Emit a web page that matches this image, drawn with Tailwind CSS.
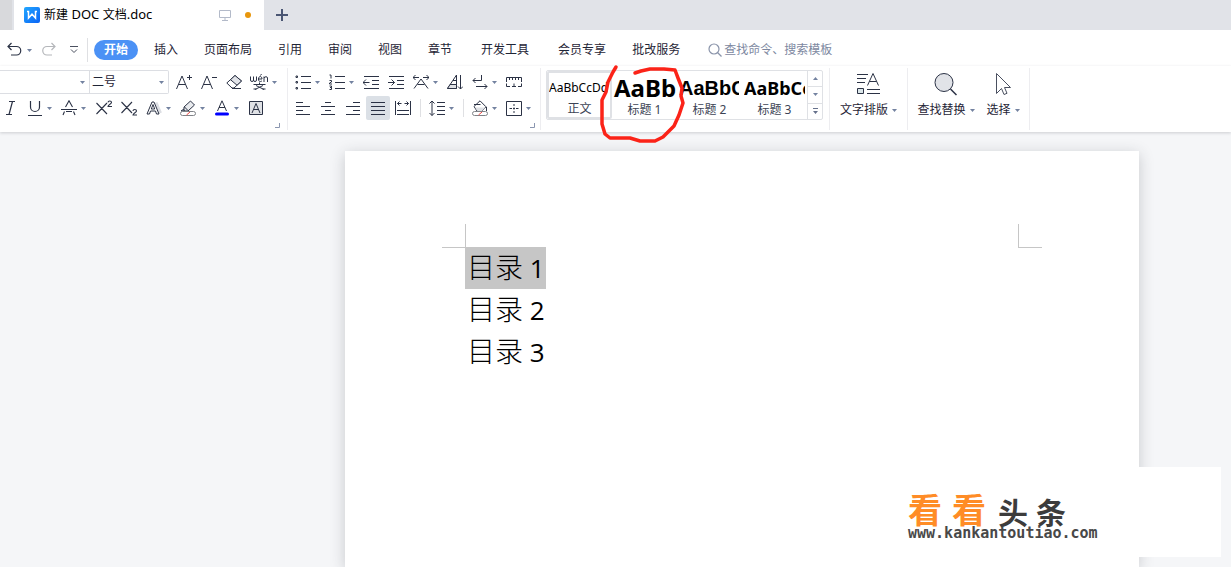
<!DOCTYPE html>
<html lang="zh-CN">
<head>
<meta charset="utf-8">
<meta name="viewport" content="width=device-width, initial-scale=1">
<title>新建 DOC 文档.doc</title>
<script src="https://cdn.jsdelivr.net/npm/@tailwindcss/browser@4"></script>
</head>
<body class="flex min-h-screen flex-col overflow-hidden bg-[#f5f6f8] font-['Noto_Sans','Noto_Sans_CJK_SC',sans-serif] text-xs text-[#1f2536]">

<svg class="hidden" aria-hidden="true">
  <symbol id="caret" viewBox="0 0 5 3"><path d="M0 0h5L2.500 3z" fill="#7382a0"/></symbol>
  <symbol id="corner" viewBox="0 0 5 5"><path d="M4.500 0v4.500H0" fill="none" stroke="#8b96b0"/></symbol>
</svg>

<!-- Document tabs -->
<header class="flex h-[30px] bg-[#e1e3e8]">
  <div class="mr-0.5 w-3 bg-[#d8d9dc]"></div>
  <div class="flex w-[250px] items-center bg-white pr-[13px] pl-2.5 text-black">
    <svg class="mr-1 h-4 w-4" viewBox="0 0 16 16"><defs><linearGradient id="lg" x1="0" y1="0" x2="1" y2="1"><stop stop-color="#22a7ff"/><stop offset="1" stop-color="#0a63f5"/></linearGradient></defs><rect width="16" height="16" rx="2" fill="url(#lg)"/><path d="M3 4.500h1.500v6.500L8 7.200l3.500 3.800V4.500H13" fill="none" stroke="#fff" stroke-width="1.500"/></svg>
    <a href="#" class="flex-1 whitespace-nowrap">新建<span class="text-[13px]"> DOC </span>文档<span class="text-[13px]">.doc</span></a>
    <svg class="mr-3.5 h-3 w-3" viewBox="0 0 12 12" fill="none" stroke="#b3bac9"><path d="M.5 1.500h11v7H.5zM6 8.500v3M3 11.500h6"/></svg>
    <span class="h-1.5 w-1.5 rounded-full bg-[#e8960c]"></span>
  </div>
  <button class="flex w-9 items-center justify-center" aria-label="新建标签"><svg class="h-3 w-3" viewBox="0 0 12 12" stroke="#4a5673" stroke-width="2"><path d="M6 0v12M0 6h12"/></svg></button>
</header>

<!-- Menu bar -->
<nav class="flex h-9 items-center bg-white pt-1 whitespace-nowrap">
  <button class="ml-[7px]" aria-label="撤销"><svg class="h-4 w-4" viewBox="0 0 16 16" fill="none" stroke="#2b3245" stroke-width="1.200"><path d="M4.500 1L1 4.500 4.500 8M1 4.500h8.500a4.200 4.200 0 0 1 0 8.500H4"/></svg></button>
  <button class="ml-1" aria-label="撤销列表"><svg class="h-[3px] w-[5px]"><use href="#caret"/></svg></button>
  <button class="ml-2.5" aria-label="恢复"><svg class="h-4 w-4" viewBox="0 0 16 16" fill="none" stroke="#b4b6ba" stroke-width="1.200"><path d="M9.500 1L13 4.500 9.500 8M13 4.500H5a4.200 4.200 0 0 0 0 8.500h5"/></svg></button>
  <button class="ml-3" aria-label="更多"><svg class="h-2 w-2" viewBox="0 0 8 8" fill="none" stroke="#4b5160"><path d="M0 .5h8M1 3.500l3 3 3-3"/></svg></button>
  <span class="ml-[9px] h-6 w-px bg-[#dfe0e3]"></span>
  <button class="ml-1.5 h-5 w-11 rounded-full bg-[#4b91f5] font-bold text-white">开始</button>
  <div class="ml-4 flex gap-[26px]">
    <a href="#">插入</a><a href="#">页面布局</a><a href="#">引用</a><a href="#">审阅</a><a href="#">视图</a><a href="#">章节</a><a href="#" class="mx-[3px]">开发工具</a><a href="#">会员专享</a><a href="#">批改服务</a>
  </div>
  <label class="ml-7 flex items-center text-[#7d889f]">
    <svg class="mr-0.5 h-3.5 w-3.5" viewBox="0 0 14 14" fill="none" stroke="#8a94aa" stroke-width="1.200"><circle cx="6" cy="6" r="5"/><path d="M9.500 9.500l4 4"/></svg>
    <input class="w-32 outline-none placeholder:text-[#7d889f]" aria-label="搜索" placeholder="查找命令、搜索模板">
  </label>
</nav>

<!-- Ribbon -->
<section class="relative z-10 flex h-[66px] bg-white pt-0.5 pb-0.5 shadow-[0_1px_3px_rgba(40,45,60,0.2)]">

  <div class="relative flex w-72 flex-col gap-0.5 border-r border-[#ededf0] pt-0.5">
    <div class="flex h-6 items-center">
      <div class="mr-[7px] flex h-6 w-[169px] items-center rounded-r-xs border-y border-r border-[#dcdee3]">
        <input class="w-20 min-w-0 outline-none" aria-label="字体">
        <svg class="mr-1 h-[3px] w-[5px] shrink-0"><use href="#caret"/></svg>
        <label class="relative flex h-full flex-1 items-center border-l border-[#dcdee3]">
          <select class="w-full appearance-none bg-transparent pl-0.5 text-[#1f2536] outline-none" aria-label="字号"><option>二号</option></select>
          <svg class="pointer-events-none absolute right-1 h-[3px] w-[5px]"><use href="#caret"/></svg>
        </label>
      </div>
      <button class="w-[25px]" aria-label="增大字号"><svg class="h-4 w-4" viewBox="0 0 16 16" fill="none" stroke="#2b3245"><path d="M.5 15L6 2l5.500 13M2.500 10.500h7M11 3.500h5M13.500 1v5"/></svg></button>
      <button class="w-[25px]" aria-label="减小字号"><svg class="h-4 w-4" viewBox="0 0 16 16" fill="none" stroke="#2b3245"><path d="M.5 15L6 2l5.500 13M2.500 10.500h7M11 3.500h5"/></svg></button>
      <button class="w-6" aria-label="清除格式"><svg class="h-4 w-4" viewBox="0 0 16 16" fill="none" stroke="#2b3245"><path d="M.8 9L9 1.500 15.500 7 8 14H6z"/><path d="M4.500 5.700L11 11.200 15.500 7 9 1.500z" fill="#e1e3e8"/><path d="M6 14.500h9"/></svg></button>
      <button class="flex items-center gap-1" aria-label="拼音指南"><svg class="h-4 w-[18px]" viewBox="0 0 18 16" fill="none" stroke="#2b3245"><path d="M.5 2.500v3.500q0 1.500 1.500 1.500t1.500-1.500v-3.500M3.500 6q0 1.500 1.500 1.500t1.500-1.500v-3.500M8.500 5h3.500c0-3.300-3.500-3.300-3.500 0s2.500 2.800 3.500 1.800M10.500 1.500l1-1.500M14 8V2.500M14 4c.8-1.700 3.500-1.700 3.500 0v4M3.500 10.500h12M9.500 8.500v2M5 15.500l8-4M14 15.500l-8-4M3.500 15h3M12.500 15h3"/></svg><svg class="h-[3px] w-[5px]"><use href="#caret"/></svg></button>
    </div>
    <div class="flex h-6 items-center">
      <button class="flex w-[23px] pl-[3px]" aria-label="倾斜"><svg class="h-4 w-4" viewBox="0 0 16 16" fill="none" stroke="#2b3245"><path d="M6 1.500h6M3 14.500h6M9.500 1.500L6 14.500" stroke-width="1.200"/></svg></button>
      <button class="flex w-[34px] items-center gap-1 pl-1" aria-label="下划线"><svg class="h-4 w-4" viewBox="0 0 16 16" fill="none" stroke="#2b3245"><path d="M3.500 1v6a4.500 4.500 0 0 0 9 0V1M1 15.500h14" stroke-width="1.200"/></svg><svg class="h-[3px] w-[5px]"><use href="#caret"/></svg></button>
      <button class="flex w-[35px] items-center gap-1 pl-1" aria-label="删除线"><svg class="h-4 w-4" viewBox="0 0 16 16" fill="none" stroke="#2b3245"><path d="M4.500 7L8 .8 11.500 7M0 9.500h16M3.500 11.500L2 15M12.500 11.500L14 15M5 11.500h6" stroke-width="1.100"/></svg><svg class="h-[3px] w-[5px]"><use href="#caret"/></svg></button>
      <button class="flex w-[25px] justify-center" aria-label="上标"><svg class="h-4 w-[17px]" viewBox="0 0 17 16" fill="none" stroke="#2b3245"><path d="M.5 3L11 14M11 3L.5 14M12 2.500c0-2 3.500-2 3.500 0 0 1.500-3.500 2-3.500 4H16" stroke-width="1.100"/></svg></button>
      <button class="flex w-[25px] justify-center" aria-label="下标"><svg class="h-4 w-[17px]" viewBox="0 0 17 16" fill="none" stroke="#2b3245"><path d="M.5 2L11 13M11 2L.5 13M12 11c0-2 3.500-2 3.500 0 0 1.500-3.500 2-3.500 4H16" stroke-width="1.100"/></svg></button>
      <button class="flex w-[34px] items-center gap-1 pl-1" aria-label="文字效果"><svg class="h-4 w-4" viewBox="0 0 16 16" fill="none" stroke="#2b3245"><path d="M14.500 13L10 2.500" stroke="#dcdee3" stroke-width="3"/><path d="M1 14L6 2h2l5 12h-2.500l-1-3h-5l-1 3zM5.300 9h3.400L7 4.500z" fill="#fff"/></svg><svg class="h-[3px] w-[5px]"><use href="#caret"/></svg></button>
      <button class="flex w-[34px] items-center gap-1 pl-1" aria-label="突出显示"><svg class="h-4 w-4" viewBox="0 0 16 16" fill="none" stroke="#2b3245"><path d="M4 7l6.500-6 4 4L8 11H4zM4.500 7l3.500 3.500M4 9l-3 2h4" fill="#e9ebee"/><rect x=".5" y="11.500" width="15" height="4" rx="2" fill="#fff" stroke="#808388"/><path d="M6.500 15l3.500-3" stroke="#ee4540"/></svg><svg class="h-[3px] w-[5px]"><use href="#caret"/></svg></button>
      <button class="flex w-[34px] items-center gap-1 pl-1" aria-label="字体颜色"><svg class="h-4 w-4" viewBox="0 0 16 16" fill="none" stroke="#2b3245"><path d="M3.500 11L8 .8 12.500 11M5 7.500h6"/><rect x="1" y="12.500" width="14" height="3" rx="1.500" fill="#00f" stroke="none"/></svg><svg class="h-[3px] w-[5px]"><use href="#caret"/></svg></button>
      <button class="flex w-6 justify-center" aria-label="字符底纹"><svg class="h-4 w-4" viewBox="0 0 16 16" fill="none" stroke="#2b3245"><path d="M1.500 1.500h13v13h-13z" fill="#dfe1e5"/><path d="M4 13L8 3.500 12 13M5.500 9.500h5"/></svg></button>
    </div>
    <svg class="absolute right-[7px] bottom-0.5 h-[5px] w-[5px]"><use href="#corner"/></svg>
  </div>

  <div class="relative flex w-[253px] flex-col gap-0.5 border-r border-[#ededf0] pt-0.5 pl-[3px]">
    <div class="flex h-6 items-center">
      <button class="flex w-[34px] items-center gap-1 pl-1" aria-label="项目符号"><svg class="h-4 w-4" viewBox="0 0 16 16" fill="none" stroke="#2b3245"><path d="M6 2.500h10M6 8.500h10M6 14.500h10"/><path d="M1 2h1.500v1.500H1zM1 7.500h1.500V9H1zM1 13.500h1.500V15H1z"/></svg><svg class="h-[3px] w-[5px]"><use href="#caret"/></svg></button>
      <button class="flex w-[34px] items-center gap-1 pl-1" aria-label="编号"><svg class="h-4 w-4" viewBox="0 0 16 16" fill="none" stroke="#2b3245"><path d="M6 2.500h10M6 8.500h10M6 14.500h10M.5 1H2v3.500M.5 6.500h2v1.500l-2 1v1h2.500M.5 12h2v1.500H1h1.500v2h-2"/></svg><svg class="h-[3px] w-[5px]"><use href="#caret"/></svg></button>
      <button class="flex w-[25px] pl-1" aria-label="减少缩进"><svg class="h-4 w-4" viewBox="0 0 16 16" fill="none" stroke="#2b3245"><path d="M1 2.500h15M9 6.500h7M9 10.500h7M1 14.500h15M0 8.500h6.500M3 5.500l-3 3 3 3"/></svg></button>
      <button class="flex w-[25px] pl-1" aria-label="增加缩进"><svg class="h-4 w-4" viewBox="0 0 16 16" fill="none" stroke="#2b3245"><path d="M1 2.500h15M9 6.500h7M9 10.500h7M1 14.500h15M0 8.500h6.500M3.500 5.500l3 3-3 3"/></svg></button>
      <button class="flex w-[34px] items-center gap-1 pl-1" aria-label="中文版式"><svg class="h-4 w-4" viewBox="0 0 16 16" fill="none" stroke="#2b3245"><path d="M0 3.500h6M2.500 1L0 3.500 2.500 6M10 3.500h6M13.500 1L16 3.500 13.500 6M1 14.500L8 5l7 9.500M4.500 10.500h7"/></svg><svg class="h-[3px] w-[5px]"><use href="#caret"/></svg></button>
      <button class="flex w-[25px] pl-1" aria-label="排序"><svg class="h-4 w-4" viewBox="0 0 16 16" fill="none" stroke="#2b3245"><path d="M.5 14.500L9.500 1v13.500z"/><path d="M3 10.500h6.500v4h-9z" fill="#dfe1e5"/><path d="M6 6.500h3.500M13.500 1v14M11 12.500l2.500 2.500 2.500-2.500"/></svg></button>
      <button class="flex w-[34px] items-center gap-1 pl-1" aria-label="显示标记"><svg class="h-4 w-4" viewBox="0 0 16 16" fill="none" stroke="#2b3245"><path d="M9.500 1v5.500H1M3.500 4L1 6.500 3.500 9M4 12.500h11M12.500 10l2.500 2.500-2.500 2.500"/></svg><svg class="h-[3px] w-[5px]"><use href="#caret"/></svg></button>
      <button class="flex w-[25px] pl-1" aria-label="标尺"><svg class="h-4 w-4" viewBox="0 0 16 16" fill="none" stroke="#2b3245"><path d="M.5 8V3.500h15V8M3.500 3.500V6M6.500 3.500V6M9.500 3.500V6M12.500 3.500V6M.5 9.500v3H4M6 12.500h4M8 9.500v3M12 12.500h3.500v-3"/></svg></button>
    </div>
    <div class="flex h-6 items-center">
      <button class="flex w-[25px] pl-1" aria-label="左对齐"><svg class="h-4 w-4" viewBox="0 0 16 16" stroke="#2b3245"><path d="M1 2.500h7M1 6.500h14M1 10.500h7M1 14.500h14"/></svg></button>
      <button class="flex w-[25px] pl-1" aria-label="居中"><svg class="h-4 w-4" viewBox="0 0 16 16" stroke="#2b3245"><path d="M5 2.500h6M1 6.500h14M5 10.500h6M1 14.500h14"/></svg></button>
      <button class="flex w-[25px] pl-1" aria-label="右对齐"><svg class="h-4 w-4" viewBox="0 0 16 16" stroke="#2b3245"><path d="M8 2.500h7M1 6.500h14M8 10.500h7M1 14.500h14"/></svg></button>
      <button class="flex h-6 w-6 items-center justify-center rounded-xs bg-[#dbe0e6]" aria-label="两端对齐"><svg class="h-4 w-4" viewBox="0 0 16 16" stroke="#2b3245"><path d="M1 2.500h14M1 6.500h14M1 10.500h14M1 14.500h14"/></svg></button>
      <button class="flex w-[26px] justify-center" aria-label="分散对齐"><svg class="h-4 w-4" viewBox="0 0 16 16" fill="none" stroke="#2b3245"><path d="M.5 1v14M15.500 1v14M2 10.500h12M2 14.500h12M2.500 3.500h4M4.500 1.500l-2 2 2 2M9.500 3.500h4M11.500 1.500l2 2-2 2"/></svg></button>
      <span class="ml-1 h-[18px] w-px bg-[#dfe0e3]"></span>
      <button class="flex w-[38px] items-center gap-1 pl-2" aria-label="行距"><svg class="h-4 w-4" viewBox="0 0 16 16" fill="none" stroke="#2b3245"><path d="M8 2.500h8M8 6.500h8M8 10.500h8M8 14.500h8M3 1v14.500M.5 3.500L3 1l2.500 2.500M.5 13L3 15.500 5.500 13"/></svg><svg class="h-[3px] w-[5px]"><use href="#caret"/></svg></button>
      <span class="ml-1 h-[18px] w-px bg-[#dfe0e3]"></span>
      <button class="ml-1 flex w-[38px] items-center gap-1 pl-1" aria-label="底纹颜色"><svg class="h-4 w-4" viewBox="0 0 16 16" fill="none" stroke="#2b3245"><path d="M2 6.500L8 .8l6 6-4 4.200H5zM2 4.500h6.500" fill="#fff"/><path d="M3 7.500h10.500L10 11H5.500z" fill="#dfe1e5" stroke="none"/><path d="M14.500 7v4"/><rect x=".5" y="11.500" width="15" height="4" rx="2" fill="#fff" stroke="#808388"/><path d="M6.500 15l3.500-3" stroke="#ee4540"/></svg><svg class="h-[3px] w-[5px]"><use href="#caret"/></svg></button>
      <button class="flex w-[34px] items-center gap-1" aria-label="边框"><svg class="h-4 w-4" viewBox="0 0 16 16" fill="none" stroke="#2b3245"><path d="M.5 1.500h15v14H.5zM8 4v2M8 7.500v2M8 11v2M3.500 8.500h2.500M7 8.500h2M10 8.500h2.500"/></svg><svg class="h-[3px] w-[5px]"><use href="#caret"/></svg></button>
    </div>
    <svg class="absolute right-[5px] bottom-0.5 h-[5px] w-[5px]"><use href="#corner"/></svg>
  </div>

  <div class="flex w-[289px] border-r border-[#ededf0] pt-0.5 pl-[5px]">
    <div class="flex h-[50px] rounded-xs border border-[#dfe1e5]">
      <button class="flex w-[65px] flex-col items-center overflow-hidden rounded-xs border-2 border-[#dfe1e5] pt-px"><span class="flex h-7 w-full items-center overflow-hidden text-black">AaBbCcDd</span><span class="h-4 leading-4 text-[#3c4354]">正文</span></button>
      <div class="relative w-[65px]">
        <button class="flex w-full flex-col items-center pt-[3px]"><span class="flex h-7 w-full items-center overflow-hidden pl-0.5 text-2xl leading-7 font-bold text-black">AaBb</span><span class="h-4 leading-4 text-[#3c4354]">标题 1</span></button>
        <svg class="pointer-events-none absolute -top-2 -left-3 h-20 w-[88px]" viewBox="600 63 88 80" fill="none" stroke="#fb2318" stroke-width="3.500" stroke-linecap="round" stroke-linejoin="round"><path d="M616 67L613 72 608 82 606 92 602 100V124L605 134 610 138 630 138 640 141H655L663 137 674 126 679 115 683 103 681 96 682 88 678 78 675 70 664 69H650L641 71 635 73"/></svg>
      </div>
      <button class="flex w-[65px] flex-col items-center overflow-hidden pt-[3px]"><span class="flex h-7 w-full items-center overflow-hidden pl-0.5 font-['Liberation_Sans',sans-serif] text-xl font-bold text-black"><span class="w-[60px] overflow-hidden">AaBbC</span></span><span class="h-4 leading-4 text-[#3c4354]">标题 2</span></button>
      <button class="flex w-[65px] flex-col items-center overflow-hidden pt-[3px]"><span class="flex h-7 w-full items-center overflow-hidden pl-0.5 text-lg font-bold text-black"><span class="w-[61px] overflow-hidden">AaBbCc</span></span><span class="h-4 leading-4 text-[#3c4354]">标题 3</span></button>
      <div class="flex w-[15px] flex-col divide-y divide-[#dfe1e5] border-l border-[#dfe1e5]">
        <button class="flex flex-1 items-center justify-center" aria-label="上一行"><svg class="h-[3px] w-[5px] rotate-180"><use href="#caret"/></svg></button>
        <button class="flex flex-1 items-center justify-center" aria-label="下一行"><svg class="h-[3px] w-[5px]"><use href="#caret"/></svg></button>
        <button class="flex flex-1 items-center justify-center" aria-label="全部样式"><svg class="h-1.5 w-[5px]" viewBox="0 0 5 6" fill="#66718c"><path d="M0 0h5v1H0zM0 3h5L2.500 6z"/></svg></button>
      </div>
    </div>
  </div>

  <div class="flex w-[78px] justify-center border-r border-[#ededf0]">
    <button class="flex flex-col items-center pt-[5px]"><svg class="h-6 w-6" viewBox="0 0 24 24" fill="none" stroke="#2b3245"><path d="M1 1.500h11M1 5.500h9M1 9.500h8M11.500 12.500L17 .5l5.500 12M13.500 8.500h7M11 16.500h13M11 20.500h13"/><path d="M1.500 15.500h6v5h-6z" fill="#dce7ea"/></svg><span class="mt-1 flex items-center gap-1 whitespace-nowrap leading-[18px]">文字排版<svg class="h-[3px] w-[5px]"><use href="#caret"/></svg></span></button>
  </div>

  <div class="flex w-[122px] justify-center gap-3 border-r border-[#ededf0]">
    <button class="flex flex-col items-center pt-[5px]"><svg class="h-6 w-6" viewBox="0 0 24 24" fill="none" stroke="#2b3245"><circle cx="10" cy="9.500" r="9" fill="#e1e3e8"/><path d="M16.500 16l6 6" stroke-width="1.500"/></svg><span class="mt-1 flex items-center gap-1 whitespace-nowrap leading-[18px]">查找替换<svg class="h-[3px] w-[5px]"><use href="#caret"/></svg></span></button>
    <button class="flex flex-col items-center pt-[5px]"><svg class="h-6 w-6" viewBox="0 0 24 24" fill="none" stroke="#4a5060"><path d="M5.500.5v20l5-5 2.500 6 3-1.200-2.500-5.800h6z"/></svg><span class="mt-1 flex items-center gap-1 whitespace-nowrap leading-[18px]">选择<svg class="h-[3px] w-[5px]"><use href="#caret"/></svg></span></button>
  </div>
</section>

<!-- Document canvas -->
<main class="relative flex flex-1 pt-[19px] pr-[92px] pl-[345px]">
  <article class="flex-1 bg-white pt-[73px] shadow-[0_3px_14px_rgba(40,45,55,0.22)]">
    <div class="flex justify-between pr-[97px] pl-[97px]">
      <span class="h-6 w-6 border-r border-b border-[#c6c6c6]"></span>
      <span class="h-6 w-6 border-b border-l border-[#c6c6c6]"></span>
    </div>
    <div class="-mt-px pl-[120px] text-[28px] leading-10 font-light text-black">
      <h1 class="h-[42px] w-[81px] bg-[#c6c6c6] pl-0.5 whitespace-nowrap">目录<span class="font-['Open_Sans'] text-[26px] font-normal"> 1</span></h1>
      <h1 class="h-[42px] pl-0.5 whitespace-nowrap">目录<span class="font-['Open_Sans'] text-[26px] font-normal"> 2</span></h1>
      <h1 class="h-[42px] pl-0.5 whitespace-nowrap">目录<span class="font-['Open_Sans'] text-[26px] font-normal"> 3</span></h1>
    </div>
  </article>

  <!-- Site watermark -->
  <div class="absolute right-2.5 bottom-2.5 h-[90px] w-80 bg-white pt-[25px] pl-[7px] font-['Noto_Sans_CJK_SC',sans-serif] font-bold">
    <div class="flex items-end whitespace-nowrap">
      <span class="flex gap-2.5 text-[34px] leading-[34px] text-[#ff8c26]"><span>看</span><span>看</span></span>
      <span class="ml-3 flex gap-2 text-[30px] leading-[30px] text-[#3c3c3c]"><span>头</span><span>条</span></span>
    </div>
    <div class="font-['DejaVu_Sans_Mono',monospace] text-[15px] leading-[14px] font-bold text-[#484848]">www.kankantoutiao.com</div>
  </div>
</main>
</body>
</html>
